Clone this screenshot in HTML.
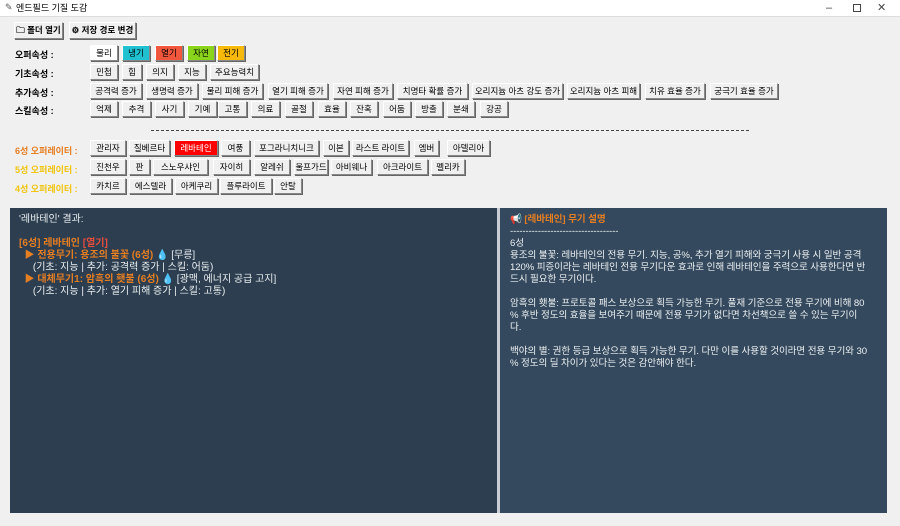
<!DOCTYPE html>
<html><head><meta charset="utf-8"><style>
*{margin:0;padding:0;box-sizing:border-box}
body{width:900px;height:526px;background:#f0f0f0;font-family:"Liberation Sans","Noto Sans CJK KR",sans-serif;font-size:9px;color:#000;position:relative;overflow:hidden}
.b{position:absolute;height:16px;background:#f0f0f0;border:1px solid #fff;border-right-color:#888;border-bottom-color:#888;box-shadow:1px 1px 0 #666;text-align:center;line-height:14px;font-size:8.5px;white-space:nowrap;overflow:hidden}
.l{position:absolute;font-size:9px;font-weight:bold;left:15px}
.o{color:#e67e22}.y{color:#f1c40f}
.p{position:absolute;top:208px;height:305px;font-size:10px;line-height:12px;padding:6px 9px;white-space:pre;color:#ecf0f1}
.w{position:absolute;top:0;font-size:11px;color:#444;line-height:16px}
</style></head><body>
<div style="position:absolute;left:0;top:0;width:900px;height:16px;background:#fff;font-size:9px;line-height:16px;padding-left:16px">엔드필드 기질 도감</div>
<div style="position:absolute;left:5px;top:2px;font-size:9px;color:#555">✎</div>
<div class="w" style="left:826px">–</div>
<div style="position:absolute;left:853px;top:4px;width:8px;height:8px;border:1px solid #444"></div>
<div class="w" style="left:877px">✕</div>
<div style="position:absolute;left:0;top:16px;width:900px;height:1px;background:#ddd"></div>
<div class="b" style="left:14px;top:22px;width:49px;height:17px;line-height:15px;font-weight:bold">🗀 폴더 열기</div>
<div class="b" style="left:69px;top:22px;width:67px;height:17px;line-height:15px;font-weight:bold">⚙ 저장 경로 변경</div>

<div class="l" style="top:48px">오퍼속성 :</div>
<div class="b" style="left:90px;top:45px;width:28px;background:#fff">물리</div>
<div class="b" style="left:122px;top:45px;width:28px;background:#1fc0d0">냉기</div>
<div class="b" style="left:155px;top:45px;width:28px;background:#f0563c">열기</div>
<div class="b" style="left:187px;top:45px;width:28px;background:#8ad51c">자연</div>
<div class="b" style="left:217px;top:45px;width:28px;background:#f6b90c">전기</div>

<div class="l" style="top:67px">기초속성 :</div>
<div class="b" style="left:90px;top:64px;width:28px">민첩</div>
<div class="b" style="left:122px;top:64px;width:20px">힘</div>
<div class="b" style="left:146px;top:64px;width:28px">의지</div>
<div class="b" style="left:178px;top:64px;width:28px">지능</div>
<div class="b" style="left:210px;top:64px;width:49px">주요능력치</div>

<div class="l" style="top:86px">추가속성 :</div>
<div class="b" style="left:90px;top:83px;width:52px">공격력 증가</div>
<div class="b" style="left:146px;top:83px;width:52px">생명력 증가</div>
<div class="b" style="left:202px;top:83px;width:61px">물리 피해 증가</div>
<div class="b" style="left:268px;top:83px;width:60px">열기 피해 증가</div>
<div class="b" style="left:333px;top:83px;width:60px">자연 피해 증가</div>
<div class="b" style="left:397px;top:83px;width:71px">치명타 확률 증가</div>
<div class="b" style="left:472px;top:83px;width:91px">오리지늄 아츠 강도 증가</div>
<div class="b" style="left:567px;top:83px;width:73px">오리지늄 아츠 피해</div>
<div class="b" style="left:645px;top:83px;width:60px">치유 효율 증가</div>
<div class="b" style="left:710px;top:83px;width:68px">궁극기 효율 증가</div>

<div class="l" style="top:104px">스킬속성 :</div>
<div class="b" style="left:90px;top:101px;width:28px">억제</div>
<div class="b" style="left:122px;top:101px;width:29px">추격</div>
<div class="b" style="left:155px;top:101px;width:29px">사기</div>
<div class="b" style="left:188px;top:101px;width:29px">기예</div>
<div class="b" style="left:218px;top:101px;width:29px">고통</div>
<div class="b" style="left:251px;top:101px;width:29px">의료</div>
<div class="b" style="left:285px;top:101px;width:28px">골절</div>
<div class="b" style="left:318px;top:101px;width:28px">효율</div>
<div class="b" style="left:350px;top:101px;width:28px">잔혹</div>
<div class="b" style="left:383px;top:101px;width:28px">어둠</div>
<div class="b" style="left:415px;top:101px;width:28px">방출</div>
<div class="b" style="left:447px;top:101px;width:28px">분쇄</div>
<div class="b" style="left:480px;top:101px;width:28px">강공</div>

<div style="position:absolute;left:151px;top:130px;width:598px;border-top:1px dashed #444"></div>

<div class="l o" style="top:144px">6성 오퍼레이터 :</div>
<div class="b" style="left:90px;top:140px;width:36px">관리자</div>
<div class="b" style="left:129px;top:140px;width:41px">질베르타</div>
<div class="b" style="left:174px;top:140px;width:44px;background:#f00;color:#fff">레바테인</div>
<div class="b" style="left:221px;top:140px;width:29px">여풍</div>
<div class="b" style="left:254px;top:140px;width:65px">포그라니치니크</div>
<div class="b" style="left:323px;top:140px;width:26px">이본</div>
<div class="b" style="left:352px;top:140px;width:57px">라스트 라이트</div>
<div class="b" style="left:414px;top:140px;width:25px">엠버</div>
<div class="b" style="left:447px;top:140px;width:43px">아델리아</div>

<div class="l y" style="top:163px">5성 오퍼레이터 :</div>
<div class="b" style="left:90px;top:159px;width:36px">진천우</div>
<div class="b" style="left:129px;top:159px;width:21px">판</div>
<div class="b" style="left:153px;top:159px;width:55px">스노우샤인</div>
<div class="b" style="left:213px;top:159px;width:37px">자이히</div>
<div class="b" style="left:254px;top:159px;width:36px">알레쉬</div>
<div class="b" style="left:294px;top:159px;width:34px">울프가드</div>
<div class="b" style="left:331px;top:159px;width:41px">아비웨나</div>
<div class="b" style="left:377px;top:159px;width:51px">아크라이트</div>
<div class="b" style="left:431px;top:159px;width:34px">펠리카</div>

<div class="l y" style="top:182px">4성 오퍼레이터 :</div>
<div class="b" style="left:90px;top:178px;width:36px">카치르</div>
<div class="b" style="left:129px;top:178px;width:43px">에스텔라</div>
<div class="b" style="left:175px;top:178px;width:43px">아케쿠리</div>
<div class="b" style="left:220px;top:178px;width:52px">플루라이트</div>
<div class="b" style="left:274px;top:178px;width:28px">안탈</div>

<div class="p" style="left:10px;width:487px;background:#2c3e50">'레바테인' 결과:

<span style="color:#e67e22;font-weight:bold">[6성] 레바테인 <span style="color:#e74c3c">[열기]</span></span>
<span style="color:#e67e22;font-weight:bold">  ▶ 전용무기: 용조의 불꽃 (6성)</span> 💧 [무릉]
     (기초: 지능 | 추가: 공격력 증가 | 스킬: 어둠)
<span style="color:#e67e22;font-weight:bold">  ▶ 대체무기1: 암흑의 횃불 (6성)</span> 💧 [광맥, 에너지 공급 고지]
     (기초: 지능 | 추가: 열기 피해 증가 | 스킬: 고통)</div>
<div style="position:absolute;left:497px;top:208px;width:3px;height:305px;background:#c8ccd4"></div>
<div class="p" style="left:500px;width:387px;background:#34495e;padding-left:10px;font-size:9.6px;letter-spacing:-0.1px"><span style="color:#e67e22;font-weight:bold">📢 [레바테인] 무기 설명</span>
-----------------------------------
6성
용조의 불꽃: 레바테인의 전용 무기. 지능, 공%, 추가 열기 피해와 궁극기 사용 시 일반 공격
120% 피증이라는 레바테인 전용 무기다운 효과로 인해 레바테인을 주력으로 사용한다면 반
드시 필요한 무기이다.

암흑의 횃불: 프로토콜 패스 보상으로 획득 가능한 무기. 풀재 기준으로 전용 무기에 비해 80
% 후반 정도의 효율을 보여주기 때문에 전용 무기가 없다면 차선책으로 쓸 수 있는 무기이
다.

백야의 별: 권한 등급 보상으로 획득 가능한 무기. 다만 이를 사용할 것이라면 전용 무기와 30
% 정도의 딜 차이가 있다는 것은 감안해야 한다.</div>
</body></html>
